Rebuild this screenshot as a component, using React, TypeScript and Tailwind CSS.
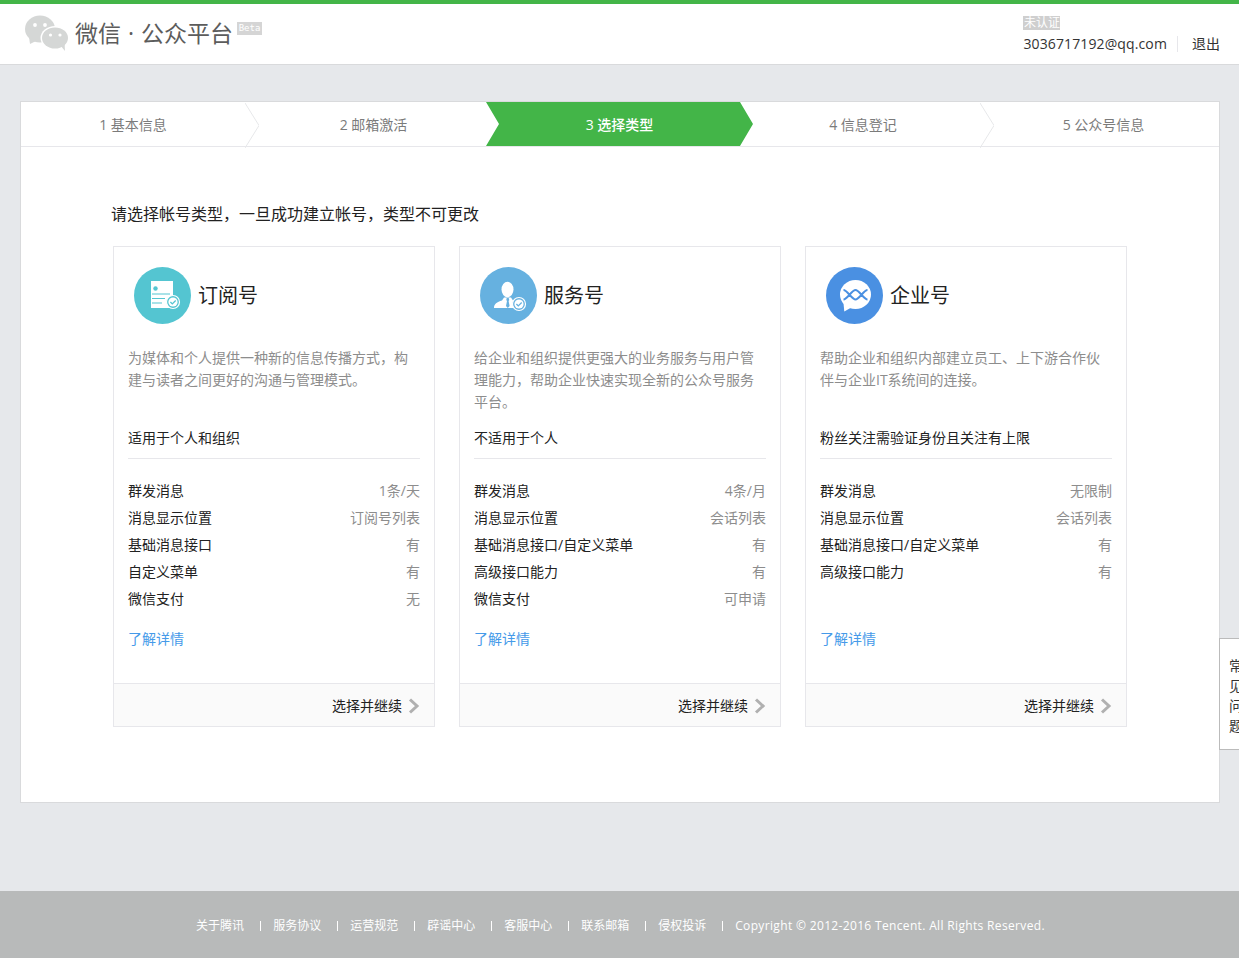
import React from "react";

const font = { fontFamily: '"Open Sans", "Noto Sans CJK SC", sans-serif' };

type Plan = {
  name: string;
  icon: React.ReactNode;
  desc: string[];
  audience: string;
  rows: [string, string][];
};

function CheckBadge({ cx, cy, color }: { cx: number; cy: number; color: string }) {
  return (
    <g>
      <circle cx={cx} cy={cy} r={6.5} fill={color} stroke="#fff" strokeWidth={1.2} />
      <circle cx={cx} cy={cy} r={4.6} fill="#fff" />
      <path d={`M${cx - 2.6} ${cy}l1.9 1.9 3.4-3.4`} fill="none" stroke={color} strokeWidth={1.3} />
    </g>
  );
}

function SubscribeIcon() {
  return (
    <svg width="57" height="57" viewBox="0 0 57 57">
      <circle cx="28.5" cy="28.5" r="28.5" fill="#54c5d1" />
      <rect x="17" y="14" width="22" height="27" fill="#fff" />
      <circle cx="21.5" cy="21.5" r="2.2" fill="#54c5d1" />
      <path d="M18 27h18M18 31.5h13M18 36h10" stroke="#54c5d1" strokeWidth="1.1" />
      <CheckBadge cx={39} cy={35} color="#54c5d1" />
    </svg>
  );
}

function ServiceIcon() {
  return (
    <svg width="57" height="57" viewBox="0 0 57 57">
      <circle cx="28.5" cy="28.5" r="28.5" fill="#66b1e0" />
      <ellipse cx="27.5" cy="22.5" rx="6" ry="7.8" fill="#fff" />
      <path d="M14 41c0-4 3-6 8-7.500l2-3h7l2 3c4 1 6 2 7 7.500z" fill="#fff" />
      <path d="M26.700 31h2l.6 2-.7 1 1 5-1.800 2-1.800-2 1-5-.7-1z" fill="#66b1e0" />
      <CheckBadge cx={39} cy={37} color="#66b1e0" />
    </svg>
  );
}

function EnterpriseIcon() {
  return (
    <svg width="57" height="57" viewBox="0 0 57 57">
      <circle cx="28.500" cy="28.500" r="28.500" fill="#4a90e2" />
      <ellipse cx="29.500" cy="27.500" rx="15.500" ry="14.500" fill="#fff" />
      <path d="M17.500 36l.8 8.500 7-4z" fill="#fff" />
      <path
        d="M17.500 23C21 23 26 32.500 29.500 32.500S38 23 41.500 23M17.500 32.500C21 32.500 26 23 29.500 23S38 32.500 41.500 32.500"
        fill="none"
        stroke="#4a90e2"
        strokeWidth="2"
      />
    </svg>
  );
}

function WechatLogo() {
  return (
    <svg width="46" height="38" viewBox="0 0 46 38">
      <ellipse cx="16" cy="15" rx="15" ry="13.500" fill="#d5d7d6" />
      <path d="M5 23l1 7 8-4z" fill="#d5d7d6" />
      <circle cx="11" cy="11" r="1.900" fill="#fff" />
      <circle cx="21" cy="11" r="1.900" fill="#fff" />
      <ellipse cx="31" cy="24" rx="14.500" ry="12" fill="#fff" />
      <ellipse cx="31" cy="24" rx="13" ry="10.500" fill="#d5d7d6" />
      <path d="M36 31l5 6-.5-9z" fill="#d5d7d6" />
      <circle cx="26.500" cy="21" r="1.600" fill="#fff" />
      <circle cx="36" cy="21" r="1.600" fill="#fff" />
    </svg>
  );
}

const plans: Plan[] = [
  {
    name: "订阅号",
    icon: <SubscribeIcon />,
    desc: ["为媒体和个人提供一种新的信息传播方式，构", "建与读者之间更好的沟通与管理模式。"],
    audience: "适用于个人和组织",
    rows: [
      ["群发消息", "1条/天"],
      ["消息显示位置", "订阅号列表"],
      ["基础消息接口", "有"],
      ["自定义菜单", "有"],
      ["微信支付", "无"],
    ],
  },
  {
    name: "服务号",
    icon: <ServiceIcon />,
    desc: ["给企业和组织提供更强大的业务服务与用户管", "理能力，帮助企业快速实现全新的公众号服务", "平台。"],
    audience: "不适用于个人",
    rows: [
      ["群发消息", "4条/月"],
      ["消息显示位置", "会话列表"],
      ["基础消息接口/自定义菜单", "有"],
      ["高级接口能力", "有"],
      ["微信支付", "可申请"],
    ],
  },
  {
    name: "企业号",
    icon: <EnterpriseIcon />,
    desc: ["帮助企业和组织内部建立员工、上下游合作伙", "伴与企业IT系统间的连接。"],
    audience: "粉丝关注需验证身份且关注有上限",
    rows: [
      ["群发消息", "无限制"],
      ["消息显示位置", "会话列表"],
      ["基础消息接口/自定义菜单", "有"],
      ["高级接口能力", "有"],
    ],
  },
];

const footerLinks = ["关于腾讯", "服务协议", "运营规范", "辟谣中心", "客服中心", "联系邮箱", "侵权投诉"];

function Chevron() {
  return (
    <svg width="14" height="45" viewBox="0 0 14 45" className="shrink-0">
      <path d="M0 0l14 22.500L0 45" fill="none" stroke="#e7e8ea" strokeWidth="1" />
    </svg>
  );
}

function Steps() {
  return (
    <div className="flex h-[45px] border-b border-[#e7e7eb] pt-px text-sm text-[#7b7b7b]">
      <div className="flex w-[224px] items-center justify-center">1 基本信息</div>
      <Chevron />
      <div className="flex w-[227px] items-center justify-center pl-[2px]">2 邮箱激活</div>
      <div className="-mt-px flex w-[267px] items-center justify-center bg-[#43b548] pt-px font-medium text-white [clip-path:polygon(0_0,254px_0,267px_50%,254px_100%,0_100%,13px_50%)]">
        3 选择类型
      </div>
      <div className="flex w-[227px] items-center justify-center pr-[7px]">4 信息登记</div>
      <Chevron />
      <div className="flex flex-1 items-center justify-center pr-[6px]">5 公众号信息</div>
    </div>
  );
}

function PlanCard({ plan }: { plan: Plan }) {
  return (
    <div className="flex h-[481px] w-[322px] flex-col border border-[#e7e7eb] bg-white">
      <div className="mt-[20px] flex h-[57px] items-center gap-[7px] pl-[20px]">
        {plan.icon}
        <span className="text-[20px] text-[#222]">{plan.name}</span>
      </div>
      <div className="mx-[14px] mt-[23px] h-[66px] text-sm leading-[22px] text-[#8d8d8d]">
        {plan.desc.map((line) => (
          <div key={line} className="whitespace-nowrap">{line}</div>
        ))}
      </div>
      <div className="mx-[14px] mt-[15px] border-b border-[#e7e7eb] pb-[10px] text-sm leading-[20px] text-[#222]">
        {plan.audience}
      </div>
      <div className="mx-[14px] mt-[18px] h-[135px] text-sm">
        {plan.rows.map(([label, value]) => (
          <div key={label} className="flex h-[27px] items-center justify-between">
            <span className="text-[#222]">{label}</span>
            <span className="text-[#8d8d8d]">{value}</span>
          </div>
        ))}
      </div>
      <a className="mx-[14px] mt-[13px] text-sm leading-[27px] text-[#459ae9]">了解详情</a>
      <div className="mt-auto flex h-[43px] items-center justify-end gap-[6px] border-t border-[#e7e7eb] bg-[#fafafa] pr-[14px] pt-[2px] text-sm text-[#222]">
        <span>选择并继续</span>
        <svg width="12" height="16" viewBox="0 0 12 16">
          <path d="M2 1.500L9 8l-7 6.500" fill="none" stroke="#b0b0b0" strokeWidth="3" />
        </svg>
      </div>
    </div>
  );
}

export default function App() {
  return (
    <div className="relative h-[958px] w-full overflow-hidden bg-[#e6e8eb]" style={font}>
      <header className="flex h-[65px] justify-between border-t-4 border-b border-t-[#43b548] border-b-[#d9dadc] bg-white pl-[24px] pr-[19px]">
        <div className="flex items-start">
          <div className="mt-[10px]"><WechatLogo /></div>
          <div className="ml-[5px] mt-[11px] whitespace-nowrap text-[23px] leading-[36px] text-[#5c5c5c] [word-spacing:1px]">
            微信 · 公众平台
          </div>
          <span className="ml-[4px] mt-[18px] flex h-[13px] w-[25px] items-center justify-center bg-[#d5d5d5] text-[9px] leading-none text-white [font-family:'DejaVu_Sans_Mono',monospace]">
            Beta
          </span>
        </div>
        <div className="pt-[12px] text-sm text-[#333]">
          <span className="block h-[14px] w-[37px] bg-[#cfcfcf] text-center text-xs leading-[14px] text-white">未认证</span>
          <div className="mt-[4px] flex items-center">
            <span className="tracking-[0.12px]">3036717192@qq.com</span>
            <span className="ml-[10px] mr-[14px] h-[16px] w-px bg-[#e7e7eb]" />
            <span>退出</span>
          </div>
        </div>
      </header>

      <main className="ml-[20px] mt-[36px] h-[702px] w-[1200px] border border-[#d9dadc] bg-white">
        <Steps />
        <h2 className="ml-[90px] mt-[55px] text-base font-normal leading-[24px] text-[#222]">
          请选择帐号类型，一旦成功建立帐号，类型不可更改
        </h2>
        <div className="ml-[92px] mt-[20px] flex gap-[24px]">
          {plans.map((plan) => (
            <PlanCard key={plan.name} plan={plan} />
          ))}
        </div>
      </main>

      <footer className="mt-[88px] flex h-[67px] items-center justify-center bg-[#b8baba] pl-[2px] pt-[3px] text-xs text-white">
        {footerLinks.map((link) => (
          <React.Fragment key={link}>
            <span>{link}</span>
            <span className="ml-[16px] mr-[12px] h-[10px] w-px bg-white" />
          </React.Fragment>
        ))}
        <span className="tracking-[0.34px]">Copyright © 2012-2016 Tencent. All Rights Reserved.</span>
      </footer>

      {/* feedback tab, clipped by the window edge */}
      <div className="absolute left-[1219px] top-[638px] h-[112px] w-[40px] border border-[#bbb] bg-white pl-[9px] pt-[17px] text-sm leading-[20px] text-[#333]">
        常<br />见<br />问<br />题
      </div>
    </div>
  );
}
